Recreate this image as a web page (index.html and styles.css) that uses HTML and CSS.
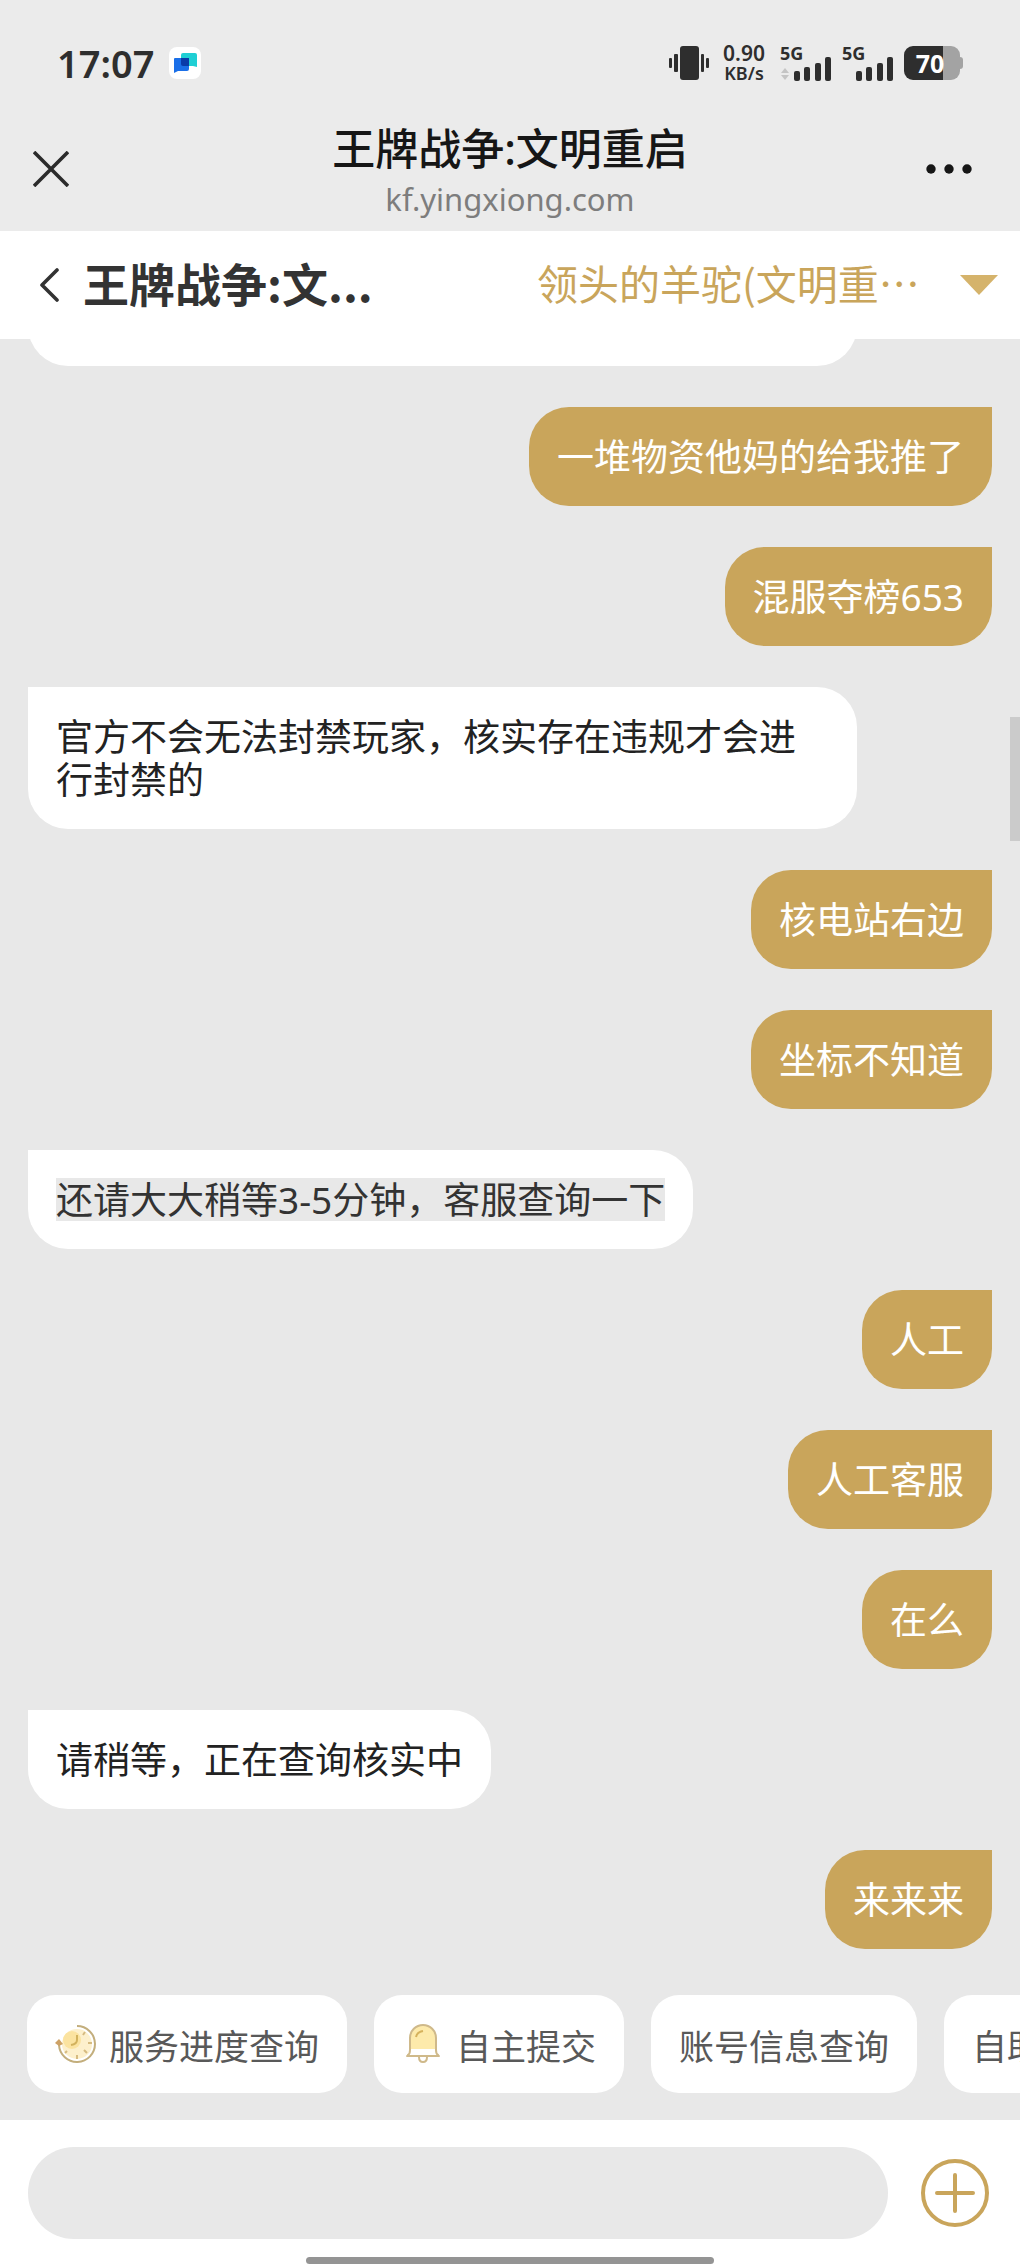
FILE: index.html
```html
<!DOCTYPE html>
<html lang="zh-CN">
<head>
<meta charset="utf-8">
<meta name="viewport" content="width=device-width, initial-scale=1">
<title>王牌战争:文明重启</title>
<link rel="stylesheet" href="styles.css">
</head>
<body>
<div class="status">
  <span class="clock">17:07</span>
  <svg class="app-badge" width="32" height="32" viewBox="0 0 32 32" aria-hidden="true">
    <rect width="32" height="32" rx="8" fill="#fff"/>
    <path d="M14 6h12q2 0 2 2v12l-4-1H14q-2 0-2-2V8q0-2 2-2z" fill="#1fcfd4"/>
    <path d="M6 11h14v11q0 2-2 2H9l-4 2V12q0-1 1-1z" fill="#1a6fe8"/>
    <path d="M12 11h8v8h-6q-2 0-2-2z" fill="#0a3ba8"/>
  </svg>
  <div class="indicators">
    <svg class="vibrate" width="40" height="34" viewBox="0 0 40 34" fill="#2e2e2e" aria-hidden="true">
      <rect x="11" width="19" height="34" rx="3"/>
      <rect x="0" y="12" width="3" height="10" rx="1"/><rect x="5" y="8" width="4" height="18" rx="1"/>
      <rect x="32" y="8" width="3" height="18" rx="1"/><rect x="37" y="12" width="3" height="10" rx="1"/>
    </svg>
    <div class="speed"><span class="speed-value">0.90</span><span class="speed-unit">KB/s</span></div>
    <div class="signal">
      <span class="network">5G</span>
      <svg class="bars" width="52" height="24" viewBox="0 0 52 24" fill="#2e2e2e" aria-hidden="true">
        <path d="M1 16l4-5 4 5zM1 18l4 5 4-5z" fill="#c4c4c4"/>
        <rect x="14" y="14" width="6" height="10" rx="2"/><rect x="24" y="10" width="6" height="14" rx="2"/>
        <rect x="35" y="6" width="6" height="18" rx="2"/><rect x="45" y="0" width="6" height="24" rx="2"/>
      </svg>
    </div>
    <div class="signal">
      <span class="network">5G</span>
      <svg class="bars" width="52" height="24" viewBox="0 0 52 24" fill="#2e2e2e" aria-hidden="true">
        <rect x="14" y="14" width="6" height="10" rx="2"/><rect x="24" y="10" width="6" height="14" rx="2"/>
        <rect x="35" y="6" width="6" height="18" rx="2"/><rect x="45" y="0" width="6" height="24" rx="2"/>
      </svg>
    </div>
    <div class="battery"><span class="battery-level">70</span></div>
  </div>
</div>

<header class="titlebar">
  <button class="icon-button" type="button" aria-label="关闭">
    <svg width="36" height="36" viewBox="0 0 36 36" fill="none" stroke="#2b2b2b" stroke-width="3.6"><path d="M1 1l34 34M35 1L1 35"/></svg>
  </button>
  <div class="page-info">
    <h1 class="page-title">王牌战争:文明重启</h1>
    <div class="page-host">kf.yingxiong.com</div>
  </div>
  <button class="icon-button more" type="button" aria-label="更多">
    <svg width="46" height="10" viewBox="0 0 46 10" fill="#161616"><circle cx="5" cy="5" r="4.7"/><circle cx="23" cy="5" r="4.7"/><circle cx="41" cy="5" r="4.7"/></svg>
  </button>
</header>

<nav class="service-nav">
  <button class="icon-button" type="button" aria-label="返回">
    <svg width="19" height="34" viewBox="0 0 19 34" fill="none" stroke="#333" stroke-width="3.6" stroke-linejoin="round" stroke-linecap="round"><path d="M17 2L2 17l15 15"/></svg>
  </button>
  <h2 class="service-title">王牌战争:文...</h2>
  <label class="account">
    <select class="account-select" aria-label="角色"><option>领头的羊驼(文明重…</option></select>
    <svg class="caret" width="38" height="20" viewBox="0 0 38 20" aria-hidden="true"><path d="M0 0h38L19 20z" fill="#d5b36b"/></svg>
  </label>
</nav>

<main class="chat">
  <div class="bubble agent wide"></div>
  <div class="bubble me">一堆物资他妈的给我推了</div>
  <div class="bubble me">混服夺榜653</div>
  <div class="bubble agent">官方不会无法封禁玩家，核实存在违规才会进行封禁的</div>
  <div class="bubble me">核电站右边</div>
  <div class="bubble me">坐标不知道</div>
  <div class="bubble agent"><span class="marked">还请大大稍等3-5分钟，客服查询一下</span></div>
  <div class="bubble me">人工</div>
  <div class="bubble me">人工客服</div>
  <div class="bubble me">在么</div>
  <div class="bubble agent">请稍等，正在查询核实中</div>
  <div class="bubble me">来来来</div>
  <div class="scroll-thumb"></div>
</main>

<div class="shortcuts">
  <button class="chip" type="button">
    <svg width="42" height="42" viewBox="0 0 42 42" fill="none" aria-hidden="true">
      <circle cx="22" cy="21" r="15" fill="#fdf0cc"/><circle cx="17" cy="17" r="9" fill="#fbe3a0"/>
      <path d="M22 3a18 18 0 1 1-18 19" stroke="#c3ae7c" stroke-width="2"/>
      <path d="M0 20l4-4 4 5-4 2z" fill="#cda266"/>
      <path d="M22 12v5q0 4-6 5" stroke="#d2b25d" stroke-width="2"/>
      <path d="M28 12l2-3M33 20h4M29 27l3 3M22 32v4M12 28l-2 2" stroke="#d6bb80" stroke-width="2"/>
    </svg>
    服务进度查询
  </button>
  <button class="chip" type="button">
    <svg width="42" height="42" viewBox="0 0 42 42" fill="none" aria-hidden="true">
      <path d="M8 15a13 13 0 0 1 26 0v11H8z" fill="#fdeaab"/>
      <path d="M8 27V15a13 13 0 0 1 26 0v12q0 4 2 5M8 27q0 4-2 5M5 33h32M17 34q0 5 4 5t4-5" stroke="#cfb98a" stroke-width="2" stroke-linejoin="round" stroke-linecap="round"/>
      <path d="M14 14q1-5 7-6" stroke="#d6b25c" stroke-width="2"/>
    </svg>
    自主提交
  </button>
  <button class="chip" type="button">账号信息查询</button>
  <button class="chip" type="button">自助服务</button>
</div>

<footer class="composer">
  <input class="message-input" type="text" aria-label="消息">
  <button class="icon-button" type="button" aria-label="添加">
    <svg width="70" height="70" viewBox="0 0 70 70" fill="none" stroke="#c9a55b" stroke-width="4"><circle cx="35" cy="35" r="32"/><path d="M35 17v36M17 35h36" stroke-linecap="round"/></svg>
  </button>
  <div class="home-bar"></div>
</footer>
</body>
</html>
```
FILE: styles.css
```css
* { box-sizing: border-box; }

body {
  margin: 0;
  height: 100vh;
  display: flex;
  flex-direction: column;
  overflow: hidden;
  background: #e8e8e8;
  color: #222;
  font-family: "Noto Sans", "Noto Sans CJK SC", sans-serif;
}

h1, h2 { margin: 0; }

button, input, select {
  border: 0;
  padding: 0;
  background: none;
  font-family: inherit;
  color: inherit;
}

svg { display: block; flex: none; }

.icon-button { display: flex; flex: none; }

/* Phone status bar */
.status {
  display: flex;
  align-items: center;
  flex: none;
  height: 90px;
  padding: 36px 60px 0 57px;
  background: #ebebeb;
  color: #2e2e2e;
  font-weight: 600;
}

.clock { font-size: 38px; line-height: 54px; }
.app-badge { margin-left: 15px; }

.indicators {
  display: flex;
  align-items: center;
  margin-left: auto;
}

.speed {
  display: flex;
  flex-direction: column;
  align-items: center;
  width: 44px;
  margin: 0 14px 0 13px;
}

.speed-value { font-size: 21px; line-height: 20px; }
.speed-unit { font-size: 18px; line-height: 20px; }

.signal {
  display: grid;
  width: 52px;
  height: 36px;
  margin-right: 10px;
}

.network { grid-area: 1 / 1; font-size: 18px; line-height: 16px; font-weight: 700; }
.bars { grid-area: 1 / 1; align-self: end; }

.battery {
  position: relative;
  width: 56px;
  height: 34px;
  padding-right: 4px;
  border-radius: 9px;
  background: linear-gradient(90deg, #2e2e2e 70%, #a3a3a3 70%);
  color: #fff;
  text-align: center;
}

.battery::after {
  content: "";
  position: absolute;
  left: 100%;
  top: 11px;
  width: 3px;
  height: 12px;
  border-radius: 0 3px 3px 0;
  background: #a3a3a3;
}

.battery-level { display: block; font-size: 25px; line-height: 34px; font-weight: 700; }

/* Browser title */
.titlebar {
  display: grid;
  grid-template-columns: 1fr auto 1fr;
  align-items: center;
  flex: none;
  padding: 29px 33px 12px;
  background: #ebebeb;
}

.more { justify-self: end; margin-right: 15px; }
.page-info { text-align: center; }
.page-title { font-size: 43px; line-height: 60px; font-weight: 500; color: #161616; }
.page-host { font-size: 31px; line-height: 40px; color: #7d7d7d; }

/* Service header */
.service-nav {
  display: flex;
  align-items: center;
  flex: none;
  height: 108px;
  padding: 0 22px 0 40px;
  background: #fff;
  color: #333;
}

.service-title,
.account-select {
  padding-bottom: 6px;
  font-family: "Noto Sans CJK SC", sans-serif;
  line-height: 60px;
}

.service-title { margin-left: 24px; font-size: 46px; font-weight: 700; white-space: nowrap; }

.account {
  display: flex;
  align-items: center;
  gap: 40px;
  margin-left: auto;
  color: #c9a55b;
}

.account-select { appearance: none; font-size: 41px; }

/* Conversation */
.chat {
  position: relative;
  display: flex;
  flex: 1;
  flex-direction: column;
  justify-content: flex-end;
  gap: 41px;
  min-height: 0;
  padding: 0 28px 46px;
  overflow: hidden;
}

.bubble {
  flex: none;
  max-width: 86%;
  min-height: 99px;
  padding: 28px;
  font-size: 37px;
  line-height: 43px;
}

.agent { align-self: flex-start; border-radius: 0 40px 40px 40px; background: #fff; }
.me { align-self: flex-end; border-radius: 40px 0 40px 40px; background: #c9a55b; color: #fff; }
.wide { width: 86%; }
.marked { display: block; background: #e8e8e8; color: #333; }

.scroll-thumb {
  position: absolute;
  right: 0;
  top: 378px;
  width: 10px;
  height: 124px;
  background: #cbcbcb;
}

/* Quick actions */
.shortcuts {
  display: flex;
  flex: none;
  gap: 27px;
  padding: 0 27px 27px;
  overflow: hidden;
}

.chip {
  display: flex;
  align-items: center;
  flex: none;
  gap: 12px;
  height: 98px;
  padding: 0 28px;
  border-radius: 28px;
  background: #fff;
  color: #595959;
  font-size: 35px;
  white-space: nowrap;
}

/* Message entry */
.composer {
  position: relative;
  display: flex;
  align-items: center;
  flex: none;
  gap: 32px;
  padding: 27px 30px 28px 28px;
  background: #fff;
}

.message-input {
  flex: 1;
  min-width: 0;
  height: 92px;
  padding: 0 40px;
  border-radius: 46px;
  background: #e8e8e8;
  font-size: 37px;
}

.home-bar {
  position: absolute;
  left: 30%;
  right: 30%;
  bottom: 3px;
  height: 7px;
  border-radius: 4px;
  background: #949494;
}
```
